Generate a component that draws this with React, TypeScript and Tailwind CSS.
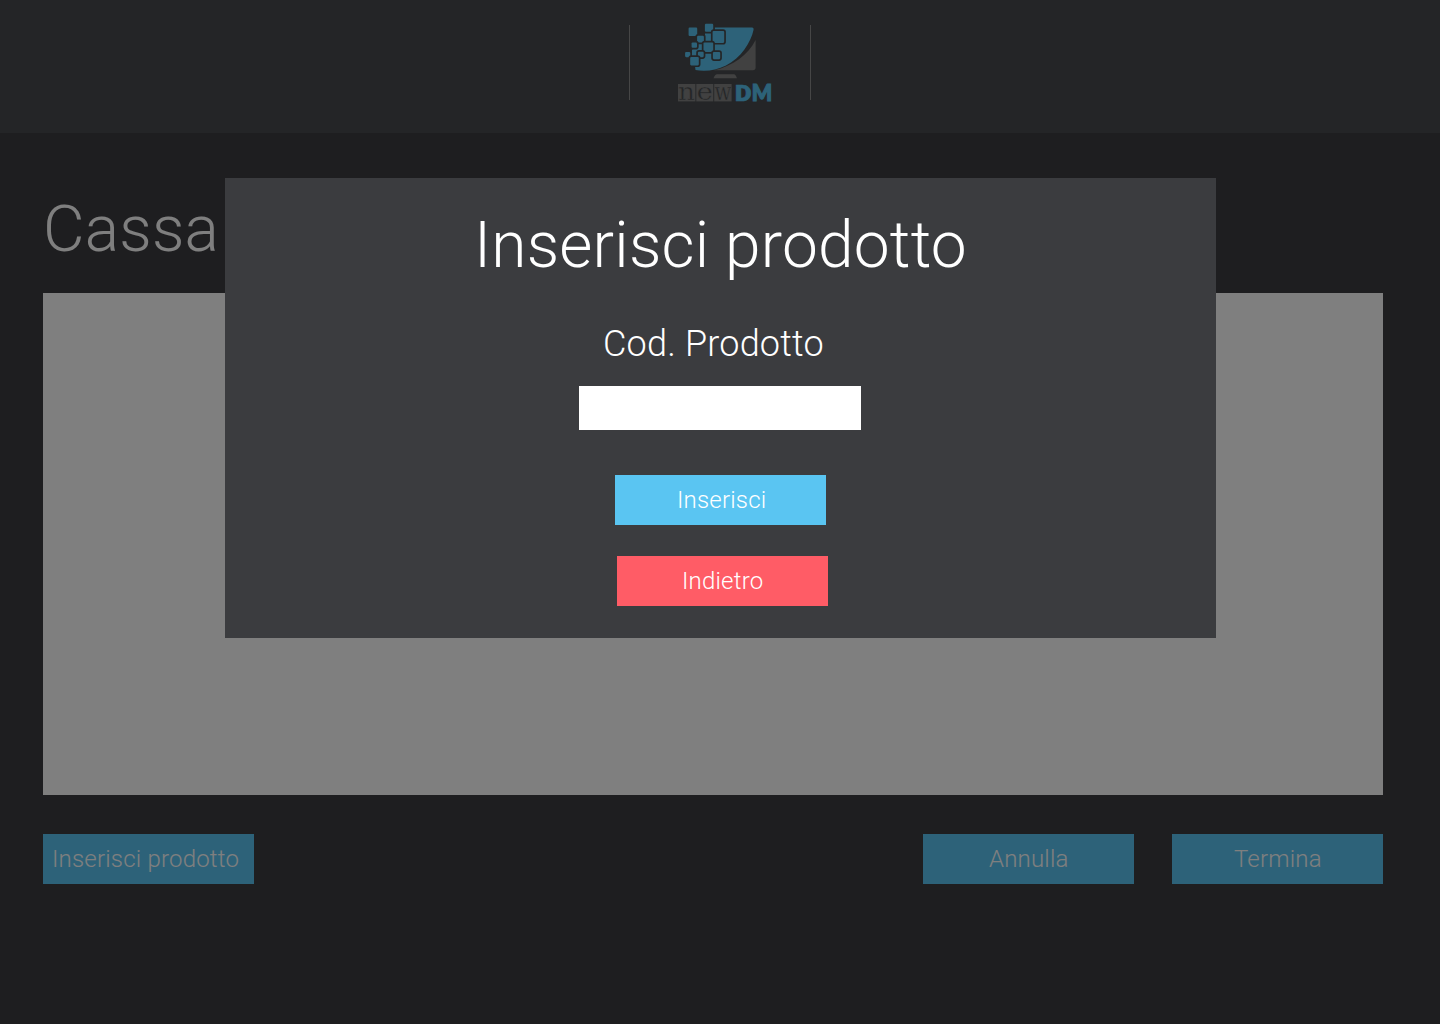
import type { ReactNode } from "react";

const TILES: [number, number, number, number][] = [
  [18.6, 12.6, 8.6, 8.4],
  [34.9, 8.8, 8.3, 8],
  [42.6, 15.9, 11.6, 12],
  [27.1, 20.8, 6.8, 6.8],
  [21.6, 27.4, 5.4, 5.4],
  [33.5, 27.4, 9.7, 9.6],
  [15.1, 37, 5.2, 5.2],
  [27.9, 36.8, 5.8, 5.4],
  [42.9, 36.9, 7.3, 7.3],
  [20.2, 41.9, 8.6, 8.5],
];

function Logo() {
  return (
    <svg width="110" height="95" viewBox="0 0 110 95" aria-label="newDM">
      <path d="M85.6 25V52.5Q85.6 55.3 82.8 55.3H44C63 51 78 40 85.6 25Z" fill="#828282" />
      <path d="M47 59.2H64Q65.5 59.2 67 63.3H43.5Q45 59.2 47 59.2Z" fill="#828282" />
      <path
        d="M35 12.5H82Q84 12.5 83.5 15C81 27 71 43 56 50.5C46 55.5 35 56.8 25.5 55L25 51L30 48V44H22V35L28 26V20H35Z"
        fill="#5ac5f2"
      />
      {TILES.map(([x, y, w, h], i) => (
        <rect key={i} x={x} y={y} width={w} height={h} rx="1.1" fill="#5ac5f2" stroke="#484b4e" strokeWidth="3.4" paintOrder="stroke" />
      ))}
      <g fill="#828282">
        <rect x="8" y="69" width="17.4" height="17.4" />
        <rect x="26.3" y="69" width="17" height="17.4" />
        <rect x="44.2" y="69" width="17.4" height="17.4" />
      </g>
      <g fill="#484b4e" stroke="#828282" strokeWidth="0.5" fontFamily="DejaVu Serif" fontSize="25">
        <text x="8" y="85" textLength="17" lengthAdjust="spacingAndGlyphs">n</text>
        <text x="26.6" y="85" textLength="16.4" lengthAdjust="spacingAndGlyphs">e</text>
        <text x="44.4" y="85" textLength="17" lengthAdjust="spacingAndGlyphs">w</text>
      </g>
      <g fill="#5ac5f2" stroke="#5ac5f2" fontWeight="900">
        <text x="65" y="86" strokeWidth="0.6" fontFamily="Roboto" fontSize="22.6" textLength="16.6" lengthAdjust="spacingAndGlyphs">D</text>
        <text x="81.8" y="85.8" strokeWidth="1.1" fontFamily="Lato" fontSize="22" textLength="20.4" lengthAdjust="spacingAndGlyphs">M</text>
      </g>
    </svg>
  );
}

function Button({ className, children }: { className: string; children: ReactNode }) {
  return (
    <button className={`flex h-[50px] w-[211px] items-center text-2xl font-light tracking-[0.2px] whitespace-nowrap text-white ${className}`}>
      {children}
    </button>
  );
}

export default function App() {
  return (
    <div className="relative h-[1024px] w-[1440px] overflow-hidden bg-[#3c3c40] font-['Roboto',sans-serif] font-light text-white">
      <header className="flex h-[133px] justify-center bg-[#484b4e]">
        <div className="mt-[25px] flex h-[75px] w-[182px] border-x border-[#8c8c8c]">
          <div className="-mt-[10px] ml-10 h-[95px] w-[110px] shrink-0">
            <Logo />
          </div>
        </div>
      </header>
      <main className="pr-[57px] pl-[43px]">
        <h1 className="pt-[59px] text-[64px] leading-[75px] tracking-[0.2px]">Cassa</h1>
        <div className="mt-[26px] h-[502px] bg-white" />
        <div className="mt-[39px] flex">
          <Button className="bg-[#5ac5f2] pl-[9px]">Inserisci prodotto</Button>
          <Button className="ml-auto bg-[#5ac5f2] pl-[66px]">Annulla</Button>
          <Button className="ml-[38px] bg-[#5ac5f2] pl-[62px]">Termina</Button>
        </div>
      </main>
      <div className="absolute inset-0 bg-black/50 pt-[178px] pl-[225px]">
        <section role="dialog" className="flex h-[460px] w-[991px] flex-col items-start bg-[#3b3c3f]">
          <h2 className="mt-[30px] ml-[249px] text-[64px] leading-[75px] tracking-[0.2px] whitespace-nowrap">Inserisci prodotto</h2>
          <label htmlFor="code" className="mt-[40px] ml-[378px] text-4xl leading-[42px] tracking-[0.2px] whitespace-nowrap">
            Cod. Prodotto
          </label>
          <input id="code" className="mt-[21px] ml-[354px] h-[44px] w-[282px] bg-white px-3 text-2xl text-black" />
          <Button className="mt-[45px] ml-[390px] bg-[#5ac5f2] pl-[62px]">Inserisci</Button>
          <Button className="mt-[31px] ml-[392px] bg-[#ff5c66] pl-[65px]">Indietro</Button>
        </section>
      </div>
    </div>
  );
}
